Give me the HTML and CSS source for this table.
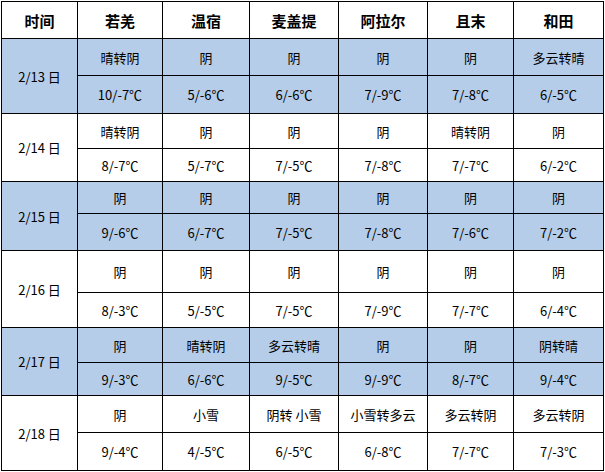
FILE: index.html
```html
<!DOCTYPE html>
<html lang="zh">
<head>
<meta charset="utf-8">
<link rel="stylesheet" href="styles.css">
</head>
<body>
<div class="grid">
  <div class="c h">时间</div><div class="c h">若羌</div><div class="c h">温宿</div><div class="c h">麦盖提</div><div class="c h">阿拉尔</div><div class="c h">且末</div><div class="c h">和田</div>

  <div class="c d b">2/13 日</div>
  <div class="c b">晴转阴</div><div class="c b">阴</div><div class="c b">阴</div><div class="c b">阴</div><div class="c b">阴</div><div class="c b">多云转晴</div>
  <div class="c b">10/-7℃</div><div class="c b">5/-6℃</div><div class="c b">6/-6℃</div><div class="c b">7/-9℃</div><div class="c b">7/-8℃</div><div class="c b">6/-5℃</div>

  <div class="c d">2/14 日</div>
  <div class="c">晴转阴</div><div class="c">阴</div><div class="c">阴</div><div class="c">阴</div><div class="c">晴转阴</div><div class="c">阴</div>
  <div class="c">8/-7℃</div><div class="c">5/-7℃</div><div class="c">7/-5℃</div><div class="c">7/-8℃</div><div class="c">7/-7℃</div><div class="c">6/-2℃</div>

  <div class="c d b">2/15 日</div>
  <div class="c b">阴</div><div class="c b">阴</div><div class="c b">阴</div><div class="c b">阴</div><div class="c b">阴</div><div class="c b">阴</div>
  <div class="c b">9/-6℃</div><div class="c b">6/-7℃</div><div class="c b">7/-5℃</div><div class="c b">7/-8℃</div><div class="c b">7/-6℃</div><div class="c b">7/-2℃</div>

  <div class="c d">2/16 日</div>
  <div class="c">阴</div><div class="c">阴</div><div class="c">阴</div><div class="c">阴</div><div class="c">阴</div><div class="c">阴</div>
  <div class="c">8/-3℃</div><div class="c">5/-5℃</div><div class="c">7/-5℃</div><div class="c">7/-9℃</div><div class="c">7/-7℃</div><div class="c">6/-4℃</div>

  <div class="c d b">2/17 日</div>
  <div class="c b">阴</div><div class="c b">晴转阴</div><div class="c b">多云转晴</div><div class="c b">阴</div><div class="c b">阴</div><div class="c b">阴转晴</div>
  <div class="c b">9/-3℃</div><div class="c b">6/-6℃</div><div class="c b">9/-5℃</div><div class="c b">9/-9℃</div><div class="c b">8/-7℃</div><div class="c b">9/-4℃</div>

  <div class="c d">2/18 日</div>
  <div class="c">阴</div><div class="c">小雪</div><div class="c">阴转 小雪</div><div class="c">小雪转多云</div><div class="c">多云转阴</div><div class="c">多云转阴</div>
  <div class="c">9/-4℃</div><div class="c">4/-5℃</div><div class="c">6/-5℃</div><div class="c">6/-8℃</div><div class="c">7/-7℃</div><div class="c">7/-3℃</div>
</div>
</body>
</html>
```

FILE: styles.css
```css
html, body {
  margin: 0;
  padding: 0;
  background: #fff;
}
body {
  font-family: "Noto Sans CJK SC", "Noto Sans", sans-serif;
  color: #000;
}
.grid {
  display: grid;
  margin: 1px 0 0 1px;
  width: 603px;
  box-sizing: border-box;
  background: #000;
  padding: 1px;
  gap: 1px;
  grid-template-columns: 75px 84px 86px 88px 88px 85px 89px;
  grid-template-rows: 36px 36px 37px 34px 32px 31px 36px 41px 34px 34px 32px 36px 37px;
}
.c {
  background: #fff;
  display: flex;
  align-items: center;
  justify-content: center;
  font-size: 13px;
  line-height: 1;
  white-space: nowrap;
}
.h {
  font-size: 15px;
  font-weight: bold;
}
.d {
  grid-row: span 2;
}
.b {
  background: #b6cde9;
}
```
